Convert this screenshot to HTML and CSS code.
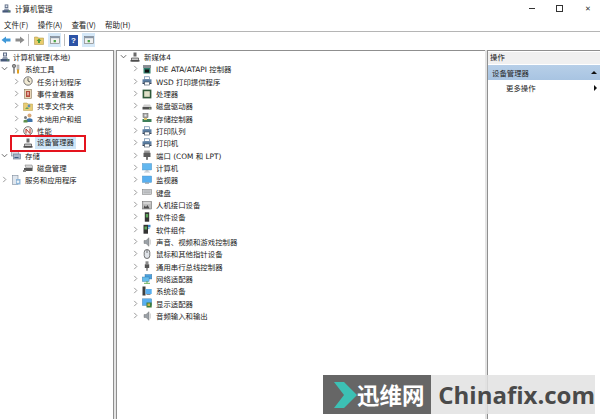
FILE: index.html
```html
<!DOCTYPE html>
<html lang="zh-CN">
<head>
<meta charset="utf-8">
<title>计算机管理</title>
<link rel="stylesheet" href="styles.css">
</head>
<body>
<svg class="defs" width="0" height="0">
  <symbol id="chev-r" viewBox="0 0 6 8"><path d="M1.5 1l3 3-3 3" fill="none" stroke="#8a8a8a"/></symbol>
  <symbol id="chev-d" viewBox="0 0 8 6"><path d="M1 1.5l3 3 3-3" fill="none" stroke="#555"/></symbol>
  <symbol id="mgmt" viewBox="0 0 10 10"><rect x="3" y="0.5" width="4" height="4" fill="#5f6d86"/><rect x="4" y="1.5" width="2" height="2" fill="#dfe5ee"/><path d="M1 9l2-4h4l2 4z" fill="#8e9aae"/><rect x="0.5" y="7" width="9" height="2.5" fill="#46587a"/><rect x="7" y="7.5" width="1.5" height="1" fill="#6fb04f"/></symbol>
  <symbol id="device" viewBox="0 0 10 10"><rect x="3.5" y="0.5" width="3" height="4" fill="#6a6a6a"/><path d="M1.5 9V6h7v3z" fill="#c8c8c8" stroke="#555" stroke-width="0.8"/><rect x="0.5" y="8" width="9" height="1.6" fill="#4e4e4e"/></symbol>
  <symbol id="tools" viewBox="0 0 10 10"><rect x="2" y="1" width="2" height="8.5" fill="#9a9a9a"/><circle cx="3" cy="2" r="1.7" fill="none" stroke="#777"/><rect x="6" y="1" width="2" height="5" fill="#c9c9c9" stroke="#888" stroke-width="0.4"/><rect x="6" y="5.5" width="2" height="4" fill="#e0a020"/></symbol>
  <symbol id="clock" viewBox="0 0 10 10"><circle cx="5" cy="5" r="4.2" fill="#f1ead4" stroke="#777"/><path d="M5 2.2V5l2 1" fill="none" stroke="#333" stroke-width="0.8"/></symbol>
  <symbol id="event" viewBox="0 0 10 10"><rect x="1.5" y="0.5" width="7" height="9" fill="#e8d7b8" stroke="#8a7a5c" stroke-width="0.6"/><rect x="3" y="2" width="4" height="6" fill="#b54a3a"/><rect x="4.5" y="3" width="1" height="3.4" fill="#fff"/></symbol>
  <symbol id="share" viewBox="0 0 10 10"><path d="M0.5 2h3.5l1 1h4.500v6.500h-9z" fill="#e9cd75" stroke="#b79a42" stroke-width="0.5"/><circle cx="6" cy="5" r="1.400" fill="#5d8fc0"/><path d="M2 8l2-2 2 2z" fill="#6ba457"/></symbol>
  <symbol id="users" viewBox="0 0 10 10"><circle cx="6.500" cy="2.500" r="2" fill="#d9a878"/><path d="M3.500 9V6.500q3-2.500 6 0V9z" fill="#3f73a8"/><circle cx="2.500" cy="4.500" r="1.500" fill="#7a7a7a"/><path d="M0.500 9.500V7.500q2-1.500 4 0v2z" fill="#5e8f4a"/></symbol>
  <symbol id="perf" viewBox="0 0 10 10"><circle cx="5" cy="5" r="4.300" fill="#f7f3ee" stroke="#777"/><path d="M3 7.500V3l4 4.500V2.500" fill="none" stroke="#b23a32"/></symbol>
  <symbol id="storage" viewBox="0 0 10 10"><rect x="0.500" y="1" width="7" height="5" fill="#d9dde3" stroke="#7d8794" stroke-width="0.6"/><rect x="2.500" y="4" width="7" height="5" fill="#a9b7c9" stroke="#66758a" stroke-width="0.6"/><rect x="3.500" y="7" width="4" height="1" fill="#3f5f85"/></symbol>
  <symbol id="disk" viewBox="0 0 10 10"><path d="M2 2h7l1 3H3z" fill="#d5d5d5" stroke="#777" stroke-width="0.5"/><rect x="1" y="5" width="8.500" height="3" fill="#555"/><rect x="0" y="7" width="3" height="2" fill="#888"/></symbol>
  <symbol id="service" viewBox="0 0 10 10"><rect x="1.500" y="0.500" width="5.500" height="9" fill="#dfe6ee" stroke="#7e8b9b" stroke-width="0.6"/><rect x="5" y="4" width="4.500" height="5.500" fill="#8fb6d8"/><circle cx="7" cy="6.700" r="1.300" fill="#eef4f8"/></symbol>
  <symbol id="ide" viewBox="0 0 10 10"><rect x="1" y="1" width="8" height="3" fill="#8a8f94"/><rect x="1.500" y="4" width="7" height="5.500" fill="#2f7c6b"/><rect x="3" y="5.500" width="4" height="3" fill="#111"/></symbol>
  <symbol id="printer" viewBox="0 0 10 10"><rect x="2.500" y="0.800" width="5" height="2.500" fill="#fff" stroke="#4a6f96" stroke-width="0.6"/><rect x="0.500" y="3.300" width="9" height="3.200" fill="#5b7ea3"/><rect x="2.500" y="6" width="5" height="3" fill="#fff" stroke="#3b4a5c" stroke-width="0.6"/><rect x="0.500" y="6.500" width="2" height="1.500" fill="#34455c"/><rect x="7.500" y="6.500" width="2" height="1.500" fill="#34455c"/></symbol>
  <symbol id="cpu" viewBox="0 0 10 10"><rect x="0.600" y="0.600" width="8.800" height="8.800" fill="#2f5a3a"/><rect x="2.200" y="2.200" width="5.600" height="5.600" fill="#dfe0c8"/></symbol>
  <symbol id="drive" viewBox="0 0 10 10"><path d="M2 3.500h6l1.500 2.500h-9z" fill="#cfcfcf"/><rect x="0.500" y="6" width="9" height="2.500" fill="#4f4f4f"/><rect x="7" y="6.800" width="1.500" height="0.800" fill="#9fd08f"/></symbol>
  <symbol id="ctrl" viewBox="0 0 10 10"><rect x="1" y="0.500" width="5" height="4" fill="#a9a9a9" stroke="#555" stroke-width="0.5"/><circle cx="3.500" cy="2.500" r="1" fill="#e8e8e8"/><rect x="0.500" y="6" width="9" height="3" fill="#3e7f59"/><rect x="2" y="5" width="3" height="2" fill="#d8c26c"/></symbol>
  <symbol id="port" viewBox="0 0 10 10"><rect x="2.200" y="0.500" width="5.600" height="2.500" fill="#9b9b9b"/><rect x="1.500" y="2.800" width="7" height="4.200" fill="#5c5c5c"/><rect x="4" y="7" width="2" height="2.800" fill="#777"/></symbol>
  <symbol id="pc" viewBox="0 0 10 10"><rect x="0.300" y="0.500" width="9.400" height="6.500" fill="#62b7ef" stroke="#4a8fc0" stroke-width="0.4"/><path d="M3.800 7h2.400l0.800 1.700H3z" fill="#b9c3cc"/><rect x="2" y="8.700" width="6" height="0.900" fill="#ccd3d9"/></symbol>
  <symbol id="monitor" viewBox="0 0 10 10"><rect x="0.300" y="1" width="9.400" height="6.500" fill="#58aff0" stroke="#4a8fc0" stroke-width="0.4"/><rect x="3" y="7.500" width="4" height="1.200" fill="#8d9aa6"/></symbol>
  <symbol id="keyboard" viewBox="0 0 10 10"><rect x="0.300" y="2.500" width="9.400" height="5" fill="#d3d6da" stroke="#777" stroke-width="0.5"/><path d="M1.500 4h7M1.500 5.800h7" stroke="#9a9a9a" stroke-width="0.7"/></symbol>
  <symbol id="hid" viewBox="0 0 10 10"><rect x="0.300" y="1.500" width="9.400" height="7.500" fill="#bdbdbd" stroke="#666" stroke-width="0.5"/><path d="M1.500 8.500l1-3 1.500 1.500 1.500-2 2 3.500z" fill="#4d4d4d"/><rect x="1.500" y="2.500" width="7" height="1" fill="#eee"/></symbol>
  <symbol id="softdev" viewBox="0 0 10 10"><rect x="2.800" y="0.300" width="4.400" height="9.400" fill="#333"/><rect x="3.800" y="2" width="2.400" height="3.500" fill="#5ea85a"/></symbol>
  <symbol id="softcomp" viewBox="0 0 10 10"><rect x="1.500" y="0.800" width="4.500" height="8.900" fill="#333"/><rect x="2.500" y="2.500" width="2.500" height="3" fill="#5ea85a"/><rect x="6" y="0.800" width="2.500" height="2.500" fill="#3c86c6"/><rect x="6" y="3.600" width="1.500" height="1.500" fill="#6aaede"/></symbol>
  <symbol id="sound" viewBox="0 0 10 10"><path d="M2 3.500h2l3-2.800v8.600l-3-2.800H2z" fill="#9aa0a6" stroke="#666" stroke-width="0.4"/><rect x="7.800" y="2.500" width="0.900" height="5" fill="#c4c4c4"/></symbol>
  <symbol id="mouse" viewBox="0 0 10 10"><rect x="2.200" y="0.500" width="5.600" height="9" rx="2.800" fill="#dfe3e8" stroke="#555" stroke-width="0.8"/><path d="M5 1v3" stroke="#555" stroke-width="0.8"/></symbol>
  <symbol id="usb" viewBox="0 0 10 10"><rect x="3.500" y="0.300" width="3" height="3" fill="#8a8a8a"/><rect x="2.800" y="3.300" width="4.400" height="3.700" fill="#555"/><rect x="4.300" y="7" width="1.400" height="2.800" fill="#777"/></symbol>
  <symbol id="net" viewBox="0 0 10 10"><rect x="3" y="0.500" width="6.800" height="4.500" fill="#4aa0de" stroke="#35729f" stroke-width="0.4"/><rect x="0.300" y="3" width="6.800" height="4.500" fill="#64bcec" stroke="#35729f" stroke-width="0.4"/><path d="M2 9.300h6M5 7v2.300" stroke="#58a648" stroke-width="0.9"/></symbol>
  <symbol id="system" viewBox="0 0 10 10"><rect x="0.500" y="0.500" width="3" height="9" fill="#3f3f3f"/><rect x="3.500" y="3" width="6.200" height="5" fill="#58aff0"/><rect x="4.500" y="8" width="4" height="1" fill="#888"/></symbol>
  <symbol id="display" viewBox="0 0 10 10"><rect x="0.300" y="0.800" width="9.400" height="6.700" fill="#58aff0" stroke="#4a7fa8" stroke-width="0.4"/><rect x="4.500" y="4.500" width="5.200" height="5" fill="#3f7d3a"/><rect x="5.500" y="5.500" width="2.500" height="2.500" fill="#c9b64a"/></symbol>
  <symbol id="back" viewBox="0 0 10 10"><path d="M0.500 5L5 1.500V3.500h4.500v3H5v2z" fill="#3f98d8"/></symbol>
  <symbol id="forward" viewBox="0 0 10 10"><path d="M9.500 5L5 1.500V3.500H0.500v3H5v2z" fill="#8c8c8c"/></symbol>
  <symbol id="up" viewBox="0 0 10 10"><path d="M0.500 2h3l1 1h5v6.500h-9z" fill="#e8cc6c" stroke="#a88e3c" stroke-width="0.5"/><path d="M5 3.500L2.500 6H4v2h2V6h1.500z" fill="#4a9b3c"/></symbol>
  <symbol id="pane" viewBox="0 0 11 10"><rect x="0.500" y="1" width="10" height="8" fill="#f1f1f1" stroke="#777" stroke-width="0.7"/><rect x="0.500" y="1" width="10" height="2" fill="#8896a8"/><rect x="4" y="5" width="2.500" height="2.500" fill="#4aa548"/></symbol>
</svg>

<div class="title-bar">
  <svg class="title-ico"><use href="#mgmt"/></svg>
  <span class="title-text">计算机管理</span>
  <div class="win-controls">
    <span class="win-min"></span>
    <span class="win-max"></span>
    <span class="win-close">✕</span>
  </div>
</div>
<div class="menu-bar">
  <span>文件(F)</span><span>操作(A)</span><span>查看(V)</span><span>帮助(H)</span>
</div>
<div class="tool-bar">
  <svg class="tool"><use href="#back"/></svg>
  <svg class="tool tool-fwd"><use href="#forward"/></svg>
  <i class="tool-sep"></i>
  <svg class="tool tool-up"><use href="#up"/></svg>
  <span class="tool-on"><svg class="tool"><use href="#pane"/></svg></span>
  <i class="tool-sep"></i>
  <span class="tool-help">?</span>
  <span class="tool-on"><svg class="tool"><use href="#pane"/></svg></span>
</div>

<main class="panes">
  <nav class="pane tree">
    <div class="row"><svg class="ico"><use href="#mgmt"/></svg><span>计算机管理(本地)</span></div>
    <div class="row l1"><svg class="ch"><use href="#chev-d"/></svg><svg class="ico"><use href="#tools"/></svg><span>系统工具</span></div>
    <div class="row l2"><svg class="ch"><use href="#chev-r"/></svg><svg class="ico"><use href="#clock"/></svg><span>任务计划程序</span></div>
    <div class="row l2"><svg class="ch"><use href="#chev-r"/></svg><svg class="ico"><use href="#event"/></svg><span>事件查看器</span></div>
    <div class="row l2"><svg class="ch"><use href="#chev-r"/></svg><svg class="ico"><use href="#share"/></svg><span>共享文件夹</span></div>
    <div class="row l2"><svg class="ch"><use href="#chev-r"/></svg><svg class="ico"><use href="#users"/></svg><span>本地用户和组</span></div>
    <div class="row l2"><svg class="ch"><use href="#chev-r"/></svg><svg class="ico"><use href="#perf"/></svg><span>性能</span></div>
    <div class="row l2"><i class="ch"></i><svg class="ico"><use href="#device"/></svg><span class="sel">设备管理器</span></div>
    <div class="row l1"><svg class="ch"><use href="#chev-d"/></svg><svg class="ico"><use href="#storage"/></svg><span>存储</span></div>
    <div class="row l2"><i class="ch"></i><svg class="ico"><use href="#disk"/></svg><span>磁盘管理</span></div>
    <div class="row l1"><svg class="ch"><use href="#chev-r"/></svg><svg class="ico"><use href="#service"/></svg><span>服务和应用程序</span></div>
    <div class="callout"></div>
  </nav>
  <section class="pane devices">
    <div class="row l1"><svg class="ch"><use href="#chev-d"/></svg><svg class="ico"><use href="#device"/></svg><span>新媒体4</span></div>
    <div class="row l2"><svg class="ch"><use href="#chev-r"/></svg><svg class="ico"><use href="#ide"/></svg><span>IDE ATA/ATAPI 控制器</span></div>
    <div class="row l2"><svg class="ch"><use href="#chev-r"/></svg><svg class="ico"><use href="#printer"/></svg><span>WSD 打印提供程序</span></div>
    <div class="row l2"><svg class="ch"><use href="#chev-r"/></svg><svg class="ico"><use href="#cpu"/></svg><span>处理器</span></div>
    <div class="row l2"><svg class="ch"><use href="#chev-r"/></svg><svg class="ico"><use href="#drive"/></svg><span>磁盘驱动器</span></div>
    <div class="row l2"><svg class="ch"><use href="#chev-r"/></svg><svg class="ico"><use href="#ctrl"/></svg><span>存储控制器</span></div>
    <div class="row l2"><svg class="ch"><use href="#chev-r"/></svg><svg class="ico"><use href="#printer"/></svg><span>打印队列</span></div>
    <div class="row l2"><svg class="ch"><use href="#chev-r"/></svg><svg class="ico"><use href="#printer"/></svg><span>打印机</span></div>
    <div class="row l2"><svg class="ch"><use href="#chev-r"/></svg><svg class="ico"><use href="#port"/></svg><span>端口 (COM 和 LPT)</span></div>
    <div class="row l2"><svg class="ch"><use href="#chev-r"/></svg><svg class="ico"><use href="#pc"/></svg><span>计算机</span></div>
    <div class="row l2"><svg class="ch"><use href="#chev-r"/></svg><svg class="ico"><use href="#monitor"/></svg><span>监视器</span></div>
    <div class="row l2"><svg class="ch"><use href="#chev-r"/></svg><svg class="ico"><use href="#keyboard"/></svg><span>键盘</span></div>
    <div class="row l2"><svg class="ch"><use href="#chev-r"/></svg><svg class="ico"><use href="#hid"/></svg><span>人机接口设备</span></div>
    <div class="row l2"><svg class="ch"><use href="#chev-r"/></svg><svg class="ico"><use href="#softdev"/></svg><span>软件设备</span></div>
    <div class="row l2"><svg class="ch"><use href="#chev-r"/></svg><svg class="ico"><use href="#softcomp"/></svg><span>软件组件</span></div>
    <div class="row l2"><svg class="ch"><use href="#chev-r"/></svg><svg class="ico"><use href="#sound"/></svg><span>声音、视频和游戏控制器</span></div>
    <div class="row l2"><svg class="ch"><use href="#chev-r"/></svg><svg class="ico"><use href="#mouse"/></svg><span>鼠标和其他指针设备</span></div>
    <div class="row l2"><svg class="ch"><use href="#chev-r"/></svg><svg class="ico"><use href="#usb"/></svg><span>通用串行总线控制器</span></div>
    <div class="row l2"><svg class="ch"><use href="#chev-r"/></svg><svg class="ico"><use href="#net"/></svg><span>网络适配器</span></div>
    <div class="row l2"><svg class="ch"><use href="#chev-r"/></svg><svg class="ico"><use href="#system"/></svg><span>系统设备</span></div>
    <div class="row l2"><svg class="ch"><use href="#chev-r"/></svg><svg class="ico"><use href="#display"/></svg><span>显示适配器</span></div>
    <div class="row l2"><svg class="ch"><use href="#chev-r"/></svg><svg class="ico"><use href="#sound"/></svg><span>音频输入和输出</span></div>
  </section>
  <aside class="pane actions">
    <div class="act-head">操作</div>
    <div class="act-group"><span>设备管理器</span><i class="tri-up"></i></div>
    <div class="act-item"><span>更多操作</span><i class="tri-right"></i></div>
  </aside>
</main>

<div class="watermark">
  <div class="wm-dark">
    <svg class="wm-chev" viewBox="0 0 23 26"><path d="M0 0h10l13 13-13 13H0l10-13z" fill="#3cc0b4"/></svg>
    <span>迅维网</span>
  </div>
  <div class="wm-light">Chinafix.com</div>
</div>
</body>
</html>
```
FILE: styles.css
```css
* { box-sizing: border-box; }
html, body { margin: 0; height: 419px; overflow: hidden; background: #fff; }
body {
  position: relative;
  display: flex;
  flex-direction: column;
  font-family: "DejaVu Sans", "Noto Sans CJK SC", sans-serif;
  font-size: 7.4px;
  color: #222;
}
.defs { position: absolute; }
svg { display: block; flex: none; }

.title-bar { height: 17px; display: flex; align-items: center; padding-left: 2px; }
.title-ico { width: 9px; height: 9px; }
.title-text { margin-left: 4px; font-size: 7.5px; }
.win-controls { margin-left: auto; display: flex; align-items: center; }
.win-min { width: 6px; height: 1px; background: #333; margin-right: 21px; }
.win-max { width: 7px; height: 7px; border: 1px solid #333; margin-right: 22px; }
.win-close { width: 8px; font-size: 7px; line-height: 8px; margin-right: 7px; color: #333; }

.menu-bar { height: 15px; display: flex; gap: 9.2px; padding: 1px 0 0 4px; align-items: center; border-bottom: 1px solid #b5b5b5; font-size: 7.5px; font-family: "Noto Sans CJK SC", sans-serif; }
.menu-bar span { width: 24.500px; white-space: nowrap; }

.tool-bar { height: 18px; display: flex; align-items: flex-start; padding: 1px 0 0 1px; background: #fff; }
.tool { width: 10px; height: 10px; margin-top: 2px; }
.tool-fwd { margin-left: 4px; }
.tool-up { margin-left: 5px; }
.tool-sep { width: 1px; height: 12px; background: #bbb; margin: 1px 0 0 3px; }
.tool-on { background: #d5e8f8; padding: 0 1.500px; height: 14px; width: 13px; margin-left: 4px; display: flex; }
.tool-on .tool { margin-top: 2px; }
.tool-help { width: 9px; height: 11px; margin: 2px 0 0 4px; background: #2c53a6; color: #fff; font: 700 8px/11px "Liberation Sans", sans-serif; text-align: center; }

.panes { flex: 1; min-height: 0; display: grid; grid-template-columns: 114px 1fr 113px; gap: 2px; background: #e4e4e4; }
.pane { background: #fff; border-left: 1px solid #8f8f8f; border-top: 1px solid #8f8f8f; overflow: hidden; position: relative; }
.tree { border-left: 0; border-right: 1px solid #8f8f8f; }

.row { height: 12.330px; display: flex; align-items: center; padding: 0 0 1px 0; white-space: nowrap; }
.tree .row.l1 { padding-left: 1px; }
.tree .row.l2 { padding-left: 13px; }
.devices .row.l1 { padding-left: 3px; }
.devices .row.l2 { padding-left: 15px; }
.ch { width: 7px; height: 7px; margin-right: 3px; flex: none; }
.ico { width: 10px; height: 10px; margin-right: 3px; }
.l1 .ico, .l2 .ico { margin-right: 4px; }
.sel { background: #cfe6f8; padding: 2px; margin-left: -2px; line-height: 8px; }

.callout { position: absolute; left: 10px; top: 84px; width: 76px; height: 17px; border: 2px solid #e4141e; }

.actions { padding-top: 1px; }
.act-head { height: 12px; background: #f0f0f0; padding-left: 2px; line-height: 12px; color: #111; margin-bottom: 1px; }
.act-group { height: 15px; background: linear-gradient(#b7cfe8, #a8c4e2); display: flex; align-items: center; justify-content: space-between; padding: 0 3px 0 4px; }
.act-item { height: 15px; display: flex; align-items: center; justify-content: space-between; padding: 0 3px 0 18px; }
.tri-up { border: 3px solid transparent; border-top: 0; border-bottom-color: #111; }
.tri-right { border: 3px solid transparent; border-right: 0; border-left-color: #111; }

.watermark { position: absolute; left: 323px; top: 375px; width: 272px; height: 39px; display: flex; font-family: "Noto Sans CJK SC", sans-serif; }
.wm-dark { width: 110px; background: rgba(90, 90, 90, 0.93); color: #fff; display: flex; align-items: center; padding-left: 11px; }
.wm-chev { width: 23px; height: 26px; }
.wm-dark span { font-size: 22.500px; font-weight: 700; line-height: 39px; }
.wm-light { flex: 1; background: rgba(226, 226, 226, 0.85); color: #4a4a4a; font: 700 24px/39px "Open Sans", "Liberation Sans", sans-serif; padding-left: 7px; white-space: nowrap; }
```
